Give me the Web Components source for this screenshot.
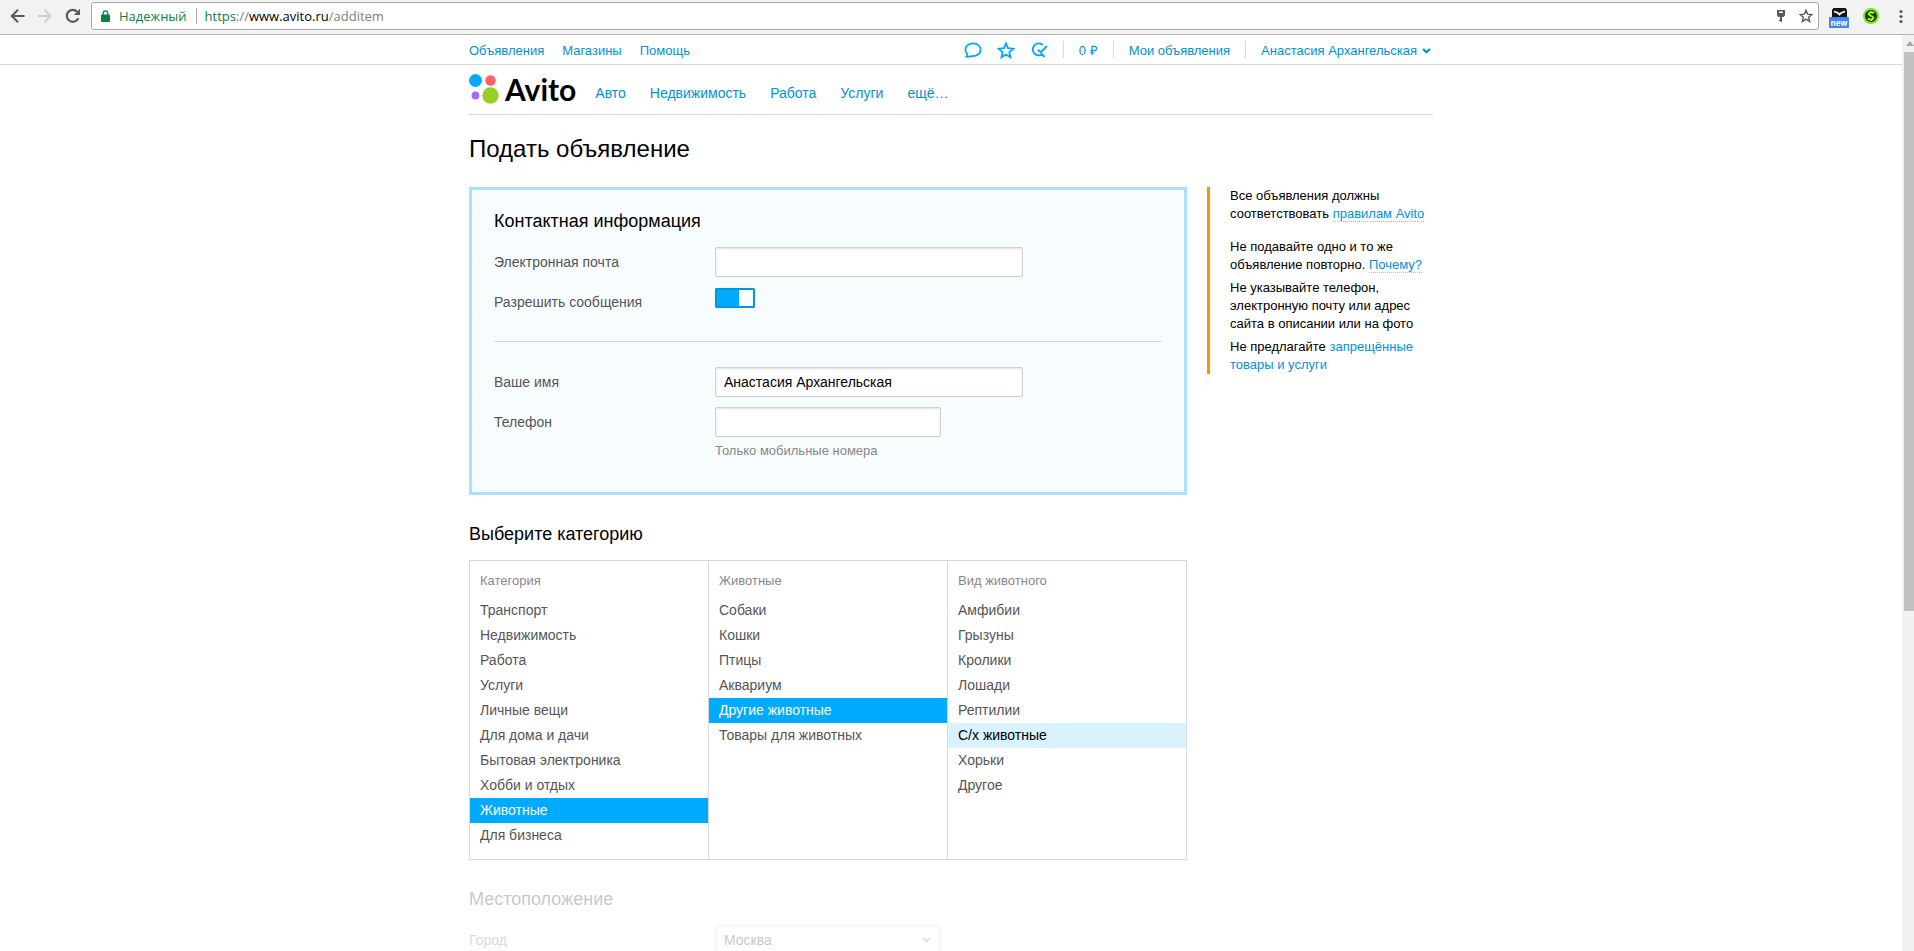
<!DOCTYPE html>
<html lang="ru">
<head>
<meta charset="utf-8">
<title>Подать объявление — Avito</title>
<style>
  body {
    margin: 0;
    height: 100vh;
    display: flex;
    flex-direction: column;
    overflow: hidden;
    font: 14px/20px "Liberation Sans", Arial, sans-serif;
    color: #000;
    background: #fff;
    --link: #0091d9;
    --accent: #00aaff;
    --line: #d8d8d8;
  }
  main { flex: 1; min-height: 0; display: flex; }
</style>
</head>
<body>
<browser-bar></browser-bar>
<main>
  <page-view>
    <site-topbar slot="top"></site-topbar>
    <site-header></site-header>
    <add-item-page></add-item-page>
  </page-view>
  <page-scrollbar></page-scrollbar>
</main>

<script>
const base = `
  :host, *, *::before { box-sizing: border-box; }
  a { color: var(--link); text-decoration: none; }
  button { font: inherit; color: inherit; border: 0; padding: 0; background: none; text-align: left; }
  svg { display: block; flex: none; }
  ul { list-style: none; margin: 0; padding: 0; }
`;

function define(name, css, html) {
  customElements.define(name, class extends HTMLElement {
    constructor() {
      super();
      const root = this.attachShadow({ mode: 'open' });
      root.innerHTML = `<style>${base}${css}</style>${typeof html === 'function' ? html(this) : html}`;
    }
  });
}

/* Browser toolbar */
define('browser-bar', `
  :host { display: flex; align-items: center; flex: none; height: 35px; padding: 2px 9px 4px 9px;
          background: #f2f2f2; border-bottom: 1px solid #b4b4b4; color: #5a5a5a; gap: 10px; }
  .nav { display: flex; gap: 12px; }
  .address { flex: 1; display: flex; align-items: center; height: 28px; padding: 0 5px 0 9px;
             background: #fff; border: 1px solid #a9a9a9; border-radius: 3px;
             font: 13px/20px "Open Sans", "Noto Sans", sans-serif; }
  .secure { display: flex; align-items: center; gap: 9px; color: #0b8043; }
  .rule { width: 1px; height: 16px; background: #b0b0b0; margin: 0 8px 0 9px; }
  .url { flex: 1; color: #808080; outline: 0; white-space: nowrap; }
  .scheme { color: #0b8043; } .host { color: #000; }
  .tools { display: flex; gap: 10px; }
  .ext { display: flex; gap: 14px; align-items: center; }
  .ext .menu { margin-left: 4px; }
  .badge { width: 20px; display: flex; flex-direction: column; align-items: center; margin-top: 3px; }
  .badge .new { width: 20px; height: 11px; border-radius: 1px; background: #4285f4; color: #fff;
                font: bold 8px/11px "Open Sans", sans-serif; text-align: center; }
`, `
  <div class="nav">
    <button aria-label="Назад"><svg width="16" height="16" viewBox="0 0 16 16" fill="none" stroke="#5a5a5a" stroke-width="2"><path d="M15.500 8H3M9 1.800 2.800 8 9 14.200"/></svg></button>
    <button aria-label="Вперёд"><svg width="16" height="16" viewBox="0 0 16 16" fill="none" stroke="#d0d0d0" stroke-width="2"><path d="M1 8h12.500M7.500 1.800 13.700 8l-6.200 6.200"/></svg></button>
    <button aria-label="Обновить"><svg width="16" height="16" viewBox="0 0 16 16"><path d="M13.300 10.200A6 6 0 1 1 12.200 3.700" fill="none" stroke="#5a5a5a" stroke-width="2.200"/><path d="M15 .8V7H8.800z" fill="#5a5a5a"/></svg></button>
  </div>
  <div class="address">
    <button class="secure"><svg width="9" height="12" viewBox="0 0 9 12"><path d="M2.200 5V3.200a2.300 2.300 0 0 1 4.600 0V5" fill="none" stroke="#0b8043" stroke-width="1.300"/><rect y="4.500" width="9" height="7.500" rx="1" fill="#0b8043"/></svg>Надежный</button>
    <i class="rule"></i>
    <div class="url" role="textbox" aria-label="Адрес страницы" contenteditable="true"><span class="scheme">https</span>://<span class="host">www.avito.ru</span>/additem</div>
    <div class="tools">
      <button aria-label="Сохранённые пароли"><svg width="16" height="16" viewBox="0 0 16 16" fill="#5a5a5a"><path fill-rule="evenodd" d="M4 2h8v5.500L10.500 9H9v5H7.500v-1H6v-1h1V9H5.500L4 7.500zM6 3.500V5h4V3.500z"/></svg></button>
      <button aria-label="Добавить в закладки"><svg width="14" height="16" viewBox="0 0 14 16" fill="none" stroke="#5a5a5a" stroke-width="1.400"><path d="m7 2.200 1.600 4 4.300.3L9.600 9.200l1.100 4.200L7 11.100l-3.700 2.300 1.100-4.200L1.100 6.500l4.300-.3z"/></svg></button>
    </div>
  </div>
  <div class="ext">
    <button class="badge" aria-label="Почта, новое"><svg width="15" height="9" viewBox="0 0 15 9"><path d="M1.500 0h12l1.500 2v7H0V2z" fill="#141414"/><path d="m2 3.500 3.500 1.200L7.500 6.500l2-1.800L13 3.500" fill="none" stroke="#fff" stroke-width="1.800"/></svg><span class="new">new</span></button>
    <button aria-label="Расширение"><svg width="16" height="16" viewBox="0 0 16 16"><circle cx="8" cy="8" r="7" fill="#26331d" stroke="#7be81c" stroke-width="2"/><path d="M11 5.200C9.500 3.900 5.600 4 5.800 6.200 6 8 10.300 7.700 10.300 9.800c0 2.200-3.800 2.100-5.300.7M8 3v1M8 11.500V13" fill="none" stroke="#8dff20" stroke-width="2"/></svg></button>
    <button class="menu" aria-label="Меню"><svg width="8" height="16" viewBox="0 0 8 16" fill="#5a5a5a"><circle cx="4" cy="3.500" r="1.600"/><circle cx="4" cy="8.500" r="1.600"/><circle cx="4" cy="13.500" r="1.600"/></svg></button>
  </div>
`);

define('page-scrollbar', `
  :host { display: block; flex: none; width: 12px; background: #f1f1f1; overflow: hidden; padding-left: 2px; }
  svg { margin: 6px 0 0 2px; }
  .thumb { width: 15px; height: 61%; margin-top: 6px; background: #c1c1c1; }
`, `<svg width="10" height="5" viewBox="0 0 10 5"><path d="M0 5 4 0l4 5z" fill="#a3a3a3"/></svg><div class="thumb"></div>`);

/* Scrolled page: full-width strip on top, centred column below */
define('page-view', `
  :host { display: block; flex: 1; min-width: 0; overflow: hidden; }
  .column { max-width: 964px; margin: 0 auto; }
`, `<slot name="top"></slot><div class="column"><slot></slot></div>`);

define('site-topbar', `
  :host { display: block; border-bottom: 1px solid var(--line); font-size: 13px; line-height: 18px; }
  .row { display: flex; justify-content: space-between; align-items: center; max-width: 964px; height: 29px; margin: 0 auto; }
  nav, .user { display: flex; align-items: center; }
  nav { gap: 18px; }
  nav, .text { padding-top: 2px; }
  .icons { display: flex; gap: 15px; }
  .sep { width: 1px; height: 17px; background: var(--line); margin: 0 15px; }
  .name { display: flex; align-items: center; gap: 5px; color: var(--link); margin-right: 2px; }
`, `
  <div class="row">
    <nav><a href="#">Объявления</a><a href="#">Магазины</a><a href="#">Помощь</a></nav>
    <div class="user">
      <div class="icons">
        <a href="#" aria-label="Сообщения"><svg width="18" height="18" viewBox="0 0 18 18" fill="none" stroke="#00aaff" stroke-width="1.800"><path d="M2.500 15.700c.7-.8 1-1.700.8-2.700A6 6 0 0 1 1.400 8.700C1.400 5 4.800 2.300 9 2.300s7.600 2.700 7.600 6.400-3.400 6.300-7.600 6.300c-2.300.3-4 .9-6.500.7z"/></svg></a>
        <a href="#" aria-label="Избранное"><svg width="18" height="18" viewBox="0 0 18 18" fill="none" stroke="#00aaff" stroke-width="1.800"><path d="m9 2.500 2 4.700 5.300.5-4 3.500 1.200 5.100L9 13.600l-4.500 2.700 1.200-5.100-4-3.500L7 7.200z"/></svg></a>
        <a href="#" aria-label="Сохранённые поиски"><svg width="18" height="18" viewBox="0 0 18 18" fill="none" stroke="#00aaff" stroke-width="1.900"><path d="M13 4.200A6 6 0 1 0 12.300 13.200M11 12.300l3.500 3.700M7.800 8.700l3 2.500 6-6.200"/></svg></a>
      </div>
      <i class="sep"></i><a class="text" href="#">0 ₽</a>
      <i class="sep"></i><a class="text" href="#">Мои объявления</a>
      <i class="sep"></i><button class="name text">Анастасия Архангельская<svg width="9" height="6" viewBox="0 0 9 6" fill="none" stroke="#0091d9" stroke-width="2.200"><path d="m1 1 3.500 3.300L8 1"/></svg></button>
    </div>
  </div>
`);

define('site-header', `
  :host { display: flex; align-items: flex-end; height: 50px; padding-bottom: 10px; border-bottom: 1px solid var(--line); }
  .logo { display: flex; gap: 6px; color: #000; font: 700 30px/30px Lato, sans-serif; }
  nav { display: flex; gap: 24px; margin-left: 19px; line-height: 22px; }
`, `
  <a class="logo" href="#">
    <svg width="30" height="30" viewBox="0 0 30 30"><circle cx="6.500" cy="6.500" r="6.500" fill="#0af"/><circle cx="21.500" cy="6.500" r="5.200" fill="#ff6163"/><circle cx="6.500" cy="21.500" r="3.900" fill="#a169f7"/><circle cx="21.500" cy="21.500" r="8.200" fill="#97cf26"/></svg>
    <span>Avito</span>
  </a>
  <nav><a href="#">Авто</a><a href="#">Недвижимость</a><a href="#">Работа</a><a href="#">Услуги</a><a href="#">ещё…</a></nav>
`);

/* One label + control row; kind is text, toggle or select */
define('form-row', `
  :host { display: grid; grid-template-columns: var(--label-width, 221px) 1fr; line-height: 30px; }
  :host(:not(:first-of-type)) { margin-top: 10px; }
  label { color: #555; }
  input, select { display: block; font: inherit; color: #000; margin: 0; }
  .box { width: 100%; height: 30px; line-height: 20px; padding: 0 8px; background: #fff; appearance: none; outline: 0;
         border: 1px solid #d0d0d0; border-radius: 2px; box-shadow: inset 0 1px 2px rgba(0, 0, 0, .12); }
  .control { position: relative; max-width: 308px; }
  .control.short { max-width: 226px; }
  .control svg { position: absolute; right: 10px; top: 12px; }
  .toggle { appearance: none; width: 40px; height: 20px; margin-top: 1px; padding: 2px; border-radius: 2px; background: var(--accent);
            display: flex; justify-content: flex-end; box-shadow: inset 0 0 0 2px #0095e0; }
  .toggle::before { content: ""; width: 14px; height: 16px; background: #fff; }
  .hint { margin: 5px 0 0; font-size: 13px; line-height: 18px; color: #888; }
`, el => {
  const kind = el.getAttribute('kind') || 'text';
  const value = el.getAttribute('value') || '';
  const hint = el.getAttribute('hint');
  const control = {
    text: `<input id="c" class="box" type="text" value="${value}">`,
    toggle: `<input id="c" class="toggle" type="checkbox" checked>`,
    select: `<select id="c" class="box"><option>${value}</option></select>
      <svg width="9" height="6" viewBox="0 0 9 6" fill="none" stroke="#888" stroke-width="2"><path d="m1 1 3.500 3.300L8 1"/></svg>`
  }[kind];
  return `<label for="c">${el.getAttribute('label')}</label>
    <div class="control${el.hasAttribute('short') ? ' short' : ''}">${control}${hint ? `<p class="hint">${hint}</p>` : ''}</div>`;
});

define('form-section', `
  :host { display: block; margin-top: 27px; }
  :host([framed]) { margin: 0; padding: 19px 22px 32px; border: 3px solid #aae1ff; background: #f7fcff; }
  :host([dimmed]) { opacity: .22; }
  h2 { margin: 0 0 14px; font-size: 18px; line-height: 24px; font-weight: 400; }
`, el => `<h2>${el.getAttribute('heading')}</h2><slot></slot>`);

define('category-column', `
  :host { display: block; padding: 11px 0; }
  :host(:not(:first-child)) { border-left: 1px solid var(--line); }
  h3 { margin: 0 10px 8px; font-size: 13px; line-height: 18px; font-weight: 400; color: #888; }
  button { display: block; width: 100%; padding: 0 10px; line-height: 25px; color: #555; }
  .selected { background: var(--accent); color: #fff; }
  .hovered { background: #d9f2ff; color: #000; }
`, el => {
  const state = name => name === el.getAttribute('selected') ? 'selected' : name === el.getAttribute('hovered') ? 'hovered' : '';
  return `<h3>${el.getAttribute('heading')}</h3><ul>${el.getAttribute('items').split('|')
    .map(name => `<li><button class="${state(name)}">${name}</button></li>`).join('')}</ul>`;
});

define('category-picker', `
  :host { display: grid; grid-template-columns: 238fr 239fr 239fr; border: 1px solid var(--line); }
`, `<slot></slot>`);

define('tips-panel', `
  :host { display: block; border-left: 3px solid #ff9100; padding-left: 20px; font-size: 13px; line-height: 18px; }
  p { margin: 0 0 5px; }
  p:first-of-type { margin-bottom: 15px; }
  p:last-of-type { margin-bottom: 0; }
  .dotted { border-bottom: 1px dotted #80c8ec; }
`, `
  <p>Все объявления должны соответствовать <a class="dotted" href="#">правилам Avito</a></p>
  <p>Не подавайте одно и то же объявление повторно. <a class="dotted" href="#">Почему?</a></p>
  <p>Не указывайте телефон, электронную почту или адрес сайта в описании или на фото</p>
  <p>Не предлагайте <a href="#">запрещённые товары и услуги</a></p>
`);

define('add-item-page', `
  :host { display: block; }
  h1 { margin: 19px 0 23px; font-size: 24px; line-height: 30px; font-weight: 400; }
  .layout { display: grid; grid-template-columns: minmax(0, 1fr) 226px; gap: 20px; align-items: start; }
  hr { border: 0; height: 1px; background: var(--line); margin: 24px 0 25px; }
  .wide { --label-width: 246px; }
`, `
  <h1>Подать объявление</h1>
  <div class="layout">
    <div>
      <form-section framed heading="Контактная информация">
        <div>
          <form-row label="Электронная почта"></form-row>
          <form-row label="Разрешить сообщения" kind="toggle"></form-row>
        </div>
        <hr>
        <div>
          <form-row label="Ваше имя" value="Анастасия Архангельская"></form-row>
          <form-row label="Телефон" short hint="Только мобильные номера"></form-row>
        </div>
      </form-section>
      <form-section heading="Выберите категорию">
        <category-picker>
          <category-column heading="Категория" selected="Животные" items="Транспорт|Недвижимость|Работа|Услуги|Личные вещи|Для дома и дачи|Бытовая электроника|Хобби и отдых|Животные|Для бизнеса"></category-column>
          <category-column heading="Животные" selected="Другие животные" items="Собаки|Кошки|Птицы|Аквариум|Другие животные|Товары для животных"></category-column>
          <category-column heading="Вид животного" hovered="С/х животные" items="Амфибии|Грызуны|Кролики|Лошади|Рептилии|С/х животные|Хорьки|Другое"></category-column>
        </category-picker>
      </form-section>
      <form-section class="wide" dimmed heading="Местоположение">
        <form-row label="Город" kind="select" short value="Москва"></form-row>
      </form-section>
    </div>
    <tips-panel></tips-panel>
  </div>
`);
</script>
</body>
</html>
